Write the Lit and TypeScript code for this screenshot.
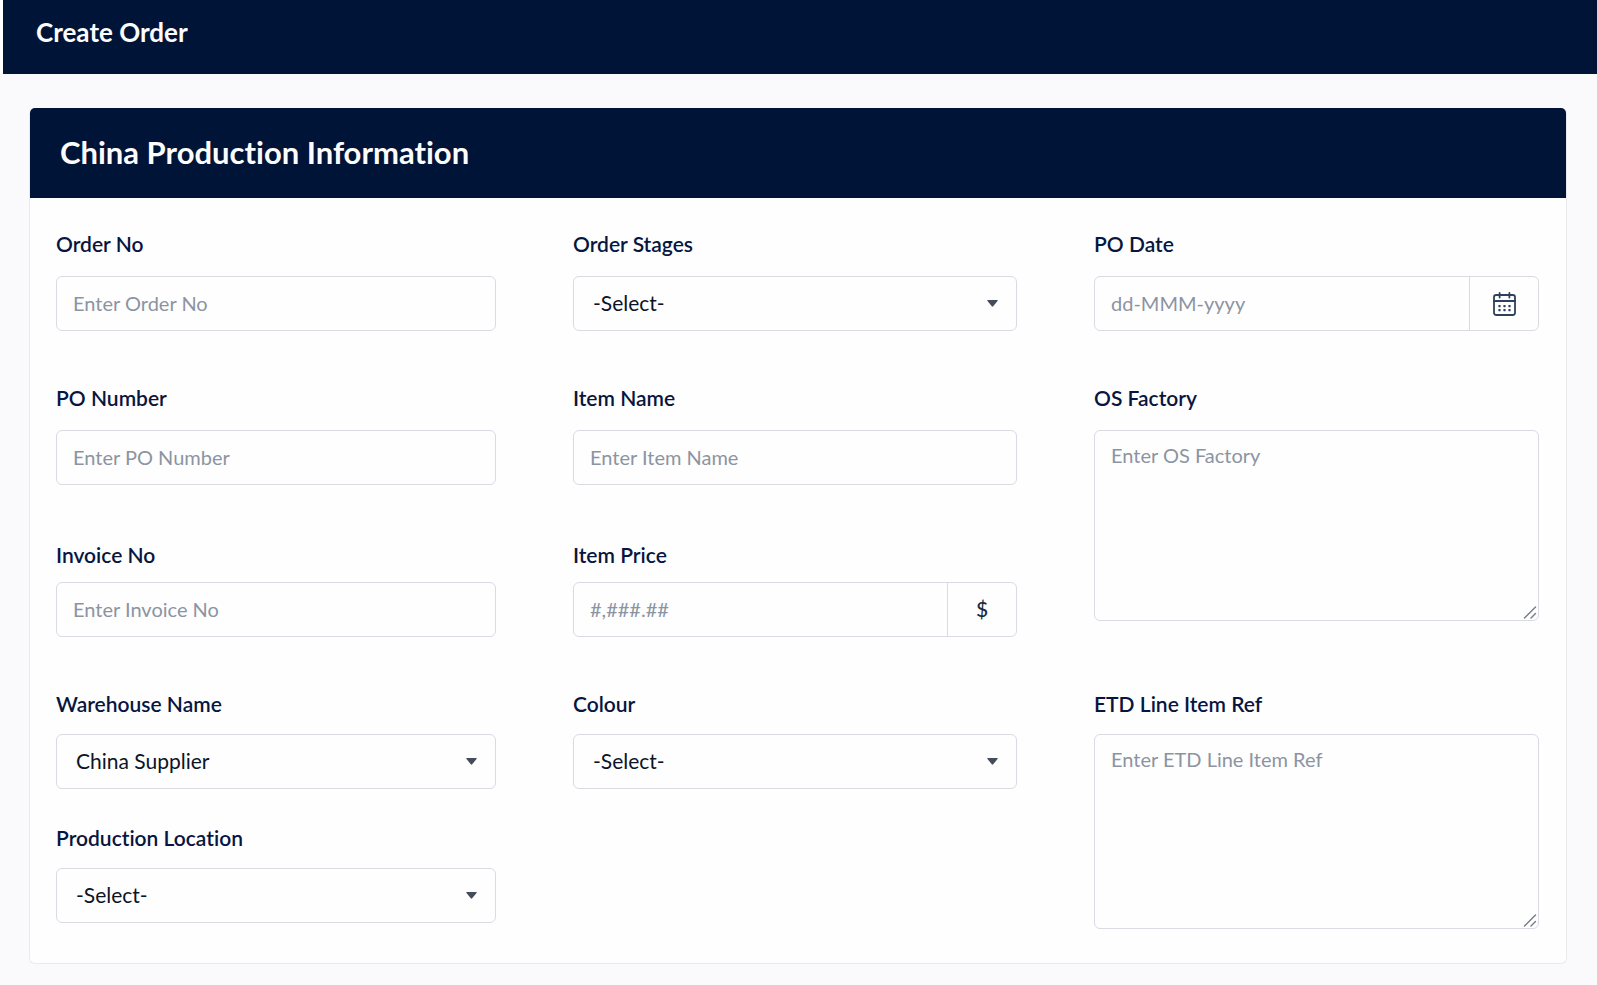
import { LitElement, html, css, svg, nothing } from "lit";
import { customElement, property } from "lit/decorators.js";
import { classMap } from "lit/directives/class-map.js";

type Kind = "text" | "select" | "area" | "date" | "price";
type Spacing = "wide" | "medium" | "tight";

interface Field {
  id: string;
  label: string;
  kind: Kind;
  hint?: string;
  options?: string[];
  spacing: Spacing;
  place: string;
}

const FIELDS: Field[] = [
  { id: "order-no", label: "Order No", kind: "text", hint: "Enter Order No", spacing: "wide", place: "after-md" },
  { id: "order-stages", label: "Order Stages", kind: "select", options: ["-Select-"], spacing: "wide", place: "after-md" },
  { id: "po-date", label: "PO Date", kind: "date", hint: "dd-MMM-yyyy", spacing: "wide", place: "after-md" },
  { id: "po-number", label: "PO Number", kind: "text", hint: "Enter PO Number", spacing: "wide", place: "after-lg" },
  { id: "item-name", label: "Item Name", kind: "text", hint: "Enter Item Name", spacing: "wide", place: "after-lg" },
  { id: "os-factory", label: "OS Factory", kind: "area", hint: "Enter OS Factory", spacing: "wide", place: "tall" },
  { id: "invoice-no", label: "Invoice No", kind: "text", hint: "Enter Invoice No", spacing: "tight", place: "after-md" },
  { id: "item-price", label: "Item Price", kind: "price", hint: "#,###.##", spacing: "tight", place: "after-md" },
  { id: "warehouse", label: "Warehouse Name", kind: "select", options: ["China Supplier"], spacing: "medium", place: "" },
  { id: "colour", label: "Colour", kind: "select", options: ["-Select-"], spacing: "medium", place: "" },
  { id: "etd-ref", label: "ETD Line Item Ref", kind: "area", hint: "Enter ETD Line Item Ref", spacing: "medium", place: "tall" },
  { id: "location", label: "Production Location", kind: "select", options: ["-Select-"], spacing: "medium", place: "" },
];

const dots = [9, 14, 19].flatMap((x) => [14, 18].map((y) => svg`<rect x=${x - 3.6} y=${y - 1} width="2.2" height="2.2" rx="0.4"></rect>`));

const calendarIcon = html`
  <svg class="calendar" viewBox="0 0 23 24" aria-hidden="true">
    <g fill="none" stroke="currentColor" stroke-width="1.8" stroke-linecap="round">
      <rect x="1" y="3" width="21" height="20" rx="2.2"></rect>
      <path d="M1 9H22M6.6 1V5.6M16.4 1V5.6"></path>
    </g>
    <g fill="currentColor">${dots}</g>
  </svg>
`;

@customElement("form-field")
class FormField extends LitElement {
  @property({ attribute: false }) field!: Field;

  static styles = css`
    :host {
      display: block;
      min-width: 0;
    }
    * {
      box-sizing: border-box;
    }
    .field {
      display: flex;
      flex-direction: column;
    }
    .wide {
      gap: 20px;
    }
    .medium {
      gap: 18px;
    }
    .tight {
      gap: 15px;
    }
    .label {
      font-size: 21px;
      line-height: 24px;
      font-weight: 600;
      color: #071640;
    }
    .box {
      display: flex;
      height: 55px;
      border: 1px solid #d9dbe3;
      border-radius: 6px;
      background: #fefefe;
      overflow: hidden;
    }
    .box:focus-within {
      border-color: #5b6f9e;
    }
    .box.auto {
      height: auto;
    }
    .control {
      flex: 1;
      min-width: 0;
      width: 100%;
      margin: 0;
      padding: 0 16px 2px;
      border: 0;
      outline: 0;
      background: transparent;
      color: #0b1526;
      font: 400 20px/24px Lato, sans-serif;
      font-variant-ligatures: none;
    }
    .control::placeholder {
      color: #8c94a2;
      opacity: 1;
    }
    .area {
      display: block;
      height: 189px;
      padding: 12px 16px;
      resize: vertical;
    }
    .area.large {
      height: 193px;
    }
    .area::-webkit-resizer {
      background: url("data:image/svg+xml,%3Csvg xmlns='http://www.w3.org/2000/svg' width='15' height='15'%3E%3Cpath d='M1.5 13L12.5 2M8 13L12.5 8.5' fill='none' stroke='%23757a84' stroke-width='1.4' stroke-linecap='round'/%3E%3C/svg%3E")
        no-repeat right bottom;
    }
    .picker {
      display: grid;
      flex: 1;
      grid-template-columns: 1fr auto;
      align-items: center;
    }
    .select {
      grid-area: 1 / 1 / 2 / 3;
      height: 100%;
      padding: 0 48px 2px 19px;
      appearance: none;
      font-size: 21px;
      cursor: pointer;
    }
    .arrow {
      grid-area: 1 / 2;
      width: 11px;
      height: 7px;
      margin-right: 18px;
      fill: #454c59;
      pointer-events: none;
    }
    .addon {
      display: flex;
      flex: none;
      align-items: center;
      justify-content: center;
      width: 69px;
      margin: 0;
      padding: 0 0 2px;
      border: 0;
      border-left: 1px solid #d9dbe3;
      background: transparent;
      color: #1c2a3d;
      font: 500 21px/24px Lato, sans-serif;
    }
    .icon {
      padding: 0;
    }
    .calendar {
      width: 23px;
      height: 24px;
      color: #2f405c;
    }
  `;

  private renderBox(f: Field) {
    if (f.kind === "select") {
      return html`<div class="box">
        <div class="picker">
          <select class="control select" id=${f.id}>
            ${f.options?.map((o) => html`<option>${o}</option>`)}
          </select>
          <svg class="arrow" viewBox="0 0 11 7" aria-hidden="true">
            <path d="M0.8 0H10.2Q11.2 0 10.5 0.9L6.2 6.3Q5.5 7 4.8 6.3L0.5 0.9Q-0.2 0 0.8 0Z"></path>
          </svg>
        </div>
      </div>`;
    }
    if (f.kind === "area") {
      const cls = { control: true, area: true, large: f.id === "etd-ref" };
      return html`<div class="box auto">
        <textarea class=${classMap(cls)} id=${f.id} placeholder=${f.hint ?? ""}></textarea>
      </div>`;
    }
    return html`<div class="box">
      <input class="control" type="text" id=${f.id} placeholder=${f.hint ?? ""} />
      ${f.kind === "date"
        ? html`<button class="addon icon" type="button" aria-label="Choose date">${calendarIcon}</button>`
        : f.kind === "price"
          ? html`<span class="addon">$</span>`
          : nothing}
    </div>`;
  }

  render() {
    const f = this.field;
    return html`<div class="field ${f.spacing}">
      <label class="label" for=${f.id}>${f.label}</label>
      ${this.renderBox(f)}
    </div>`;
  }
}

@customElement("app-root")
class AppRoot extends LitElement {
  static styles = css`
    :host {
      display: block;
      min-height: 100vh;
      background: #fafafc;
      font-family: Lato, sans-serif;
      font-variant-ligatures: none;
    }
    * {
      box-sizing: border-box;
    }
    .topbar {
      display: flex;
      padding: 16px 32px 26px 33px;
      border-left: 3px solid #fefefe;
      background: #001438;
      background-clip: padding-box;
      color: #fdfdfe;
    }
    .page-title {
      margin: 0;
      font-size: 26px;
      line-height: 32px;
      font-weight: 700;
    }
    .content {
      padding: 34px 30px 22px 29px;
    }
    .card {
      border: 1px solid #e9eaee;
      border-top: 0;
      border-radius: 6px;
      background: #fefefe;
    }
    .card-head {
      padding: 24px 30px 26px;
      border-radius: 5px 5px 0 0;
      background: #001438;
      color: #fdfdfe;
    }
    .card-title {
      margin: 0;
      font-size: 31px;
      line-height: 40px;
      font-weight: 700;
    }
    .grid {
      display: grid;
      grid-template-columns: 440fr 444fr 445fr;
      grid-template-rows: repeat(4, auto) 1fr;
      align-items: start;
      gap: 37px 77px;
      padding: 34px 27px 34px 26px;
    }
    .after-md {
      padding-bottom: 18px;
    }
    .after-lg {
      padding-bottom: 21px;
    }
    .tall {
      grid-row-end: span 2;
    }
  `;

  render() {
    return html`
      <header class="topbar"><h1 class="page-title">Create Order</h1></header>
      <main class="content">
        <section class="card">
          <div class="card-head"><h2 class="card-title">China Production Information</h2></div>
          <form class="grid">
            ${FIELDS.map((f) => html`<form-field class=${f.place} .field=${f}></form-field>`)}
          </form>
        </section>
      </main>
    `;
  }
}
